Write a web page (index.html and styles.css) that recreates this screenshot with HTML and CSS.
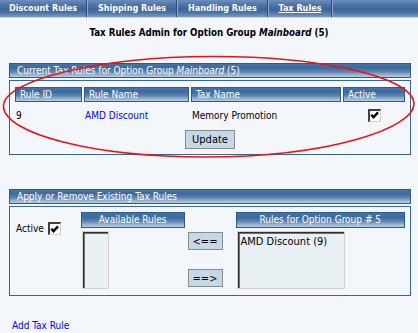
FILE: index.html
```html
<!DOCTYPE html>
<html>
<head>
<meta charset="utf-8">
<link rel="stylesheet" href="styles.css">
</head>
<body>
<nav class="tabs">
  <a class="tab tab-1">Discount Rules</a>
  <a class="tab tab-2">Shipping Rules</a>
  <a class="tab tab-3">Handling Rules</a>
  <a class="tab tab-4 current">Tax Rules</a>
</nav>

<h1 class="title">Tax Rules Admin for Option Group <i>Mainboard</i> (5)</h1>

<section class="panel panel-current">
  <div class="panel-head">Current Tax Rules for Option Group <i>Mainboard</i> (5)</div>
  <div class="panel-body">
    <div class="rules-grid">
      <div class="th">Rule ID</div>
      <div class="th">Rule Name</div>
      <div class="th">Tax Name</div>
      <div class="th">Active</div>
      <div class="td">9</div>
      <div class="td"><a class="link">AMD Discount</a></div>
      <div class="td">Memory Promotion</div>
      <div class="td td-center"><span class="cb"><svg viewBox="0 0 9 9" width="9" height="9"><path d="M1.3 3.8 L3.5 6.3 L8 1.4" fill="none" stroke="#000" stroke-width="2.4"/></svg></span></div>
    </div>
    <div class="actions"><button class="btn btn-update">Update</button></div>
  </div>
</section>

<section class="panel panel-apply">
  <div class="panel-head">Apply or Remove Existing Tax Rules</div>
  <div class="panel-body apply-body">
    <div class="active-field">Active <span class="cb"><svg viewBox="0 0 9 9" width="9" height="9"><path d="M1.3 3.8 L3.5 6.3 L8 1.4" fill="none" stroke="#000" stroke-width="2.4"/></svg></span></div>
    <div class="col col-avail">
      <div class="th th-center">Available Rules</div>
      <div class="listbox listbox-small"></div>
    </div>
    <div class="arrows">
      <button class="btn btn-arrow">&lt;==</button>
      <button class="btn btn-arrow">==&gt;</button>
    </div>
    <div class="col col-group">
      <div class="th th-center">Rules for Option Group # 5</div>
      <div class="listbox listbox-wide">AMD Discount (9)</div>
    </div>
  </div>
</section>

<a class="link add-link">Add Tax Rule</a>

<svg class="circle" width="418" height="333" viewBox="0 0 418 333">
  <path d="M210 56.5 C315 56, 414 76, 414 104 C414 128, 330 157, 205 157 C95 157, 3.5 134, 3.5 106 C3.5 80, 100 57, 210 56.5 Z" fill="none" stroke="#ee1111" stroke-width="1.6"/>
</svg>
</body>
</html>
```

FILE: styles.css
```css
html, body {
  margin: 0;
  padding: 0;
}
body {
  position: relative;
  width: 418px;
  height: 333px;
  overflow: hidden;
  background: #f3f6fa;
  font-family: "DejaVu Sans Condensed", "DejaVu Sans", sans-serif;
  font-stretch: condensed;
  font-size: 10px;
  color: #000;
}

/* tab bar */
.tabs {
  display: flex;
  height: 17px;
  background: linear-gradient(#6e8fbc 0%, #5077a8 25%, #3d6698 55%, #4b74a7 75%, #7b9bc5 100%);
  border-bottom: 1px solid #c9d6e6;
}
.tab {
  box-sizing: border-box;
  color: #fff;
  font-weight: bold;
  font-size: 9px;
  line-height: 16px;
  text-align: center;
  border-right: 1px solid #2a4c78;
  box-shadow: 1px 0 0 #8eaad0;
  white-space: nowrap;
}
.tab-1 { width: 87px; }
.tab-2 { width: 89px; margin-left: 1px; }
.tab-3 { width: 90px; margin-left: 1px; }
.tab-4 { width: 63px; margin-left: 1px; }
.current { text-decoration: underline; }

.title {
  margin: 9px 0 0 0;
  font-size: 9.7px;
  font-weight: bold;
  line-height: 12px;
  text-align: center;
}

/* panels */
.panel {
  margin: 0 7px 0 9px;
}
.panel-current { margin-top: 24px; }
.panel-apply { margin-top: 34px; }

.panel-head, .th {
  box-sizing: border-box;
  height: 15px;
  line-height: 13px;
  border: 1px solid #2e5b8c;
  background: linear-gradient(#4674a6 0%, #3c6a9d 30%, #5d85b3 60%, #9cb7d5 85%, #b6cbe2 100%);
  color: #fff;
  white-space: nowrap;
}
.panel-head {
  padding-left: 7px;
}
.panel-body {
  margin-top: 2px;
  border: 1px solid #336699;
  padding: 6px 5px 5px 5px;
}

.rules-grid {
  display: grid;
  grid-template-columns: 67px 105px 150px 62px;
  grid-template-rows: 15px 26px;
  column-gap: 2px;
}
.th { padding-left: 4px; }
.th-center { padding-left: 0; text-align: center; }
.td {
  display: flex;
  align-items: center;
  padding-left: 1px;
  white-space: nowrap;
}
.td-center { justify-content: center; padding-left: 0; }

.link { color: #0000ff; text-decoration: none; }

.cb {
  display: inline-flex;
  align-items: center;
  justify-content: center;
  box-sizing: border-box;
  width: 13px;
  height: 13px;
  background: #fff;
  border-top: 2px solid #404040;
  border-left: 2px solid #404040;
  border-right: 1px solid #d4d0c8;
  border-bottom: 1px solid #d4d0c8;
}

.actions {
  display: flex;
  justify-content: center;
  margin-top: 2px;
}
.btn {
  box-sizing: border-box;
  height: 19px;
  padding: 0;
  background: #c5d8e8;
  border: 1px solid #8a8a8a;
  font-family: inherit;
  font-stretch: condensed;
  font-size: 11px;
  color: #000;
}
.btn-update { width: 50px; }

/* apply section */
.apply-body {
  display: flex;
  align-items: flex-start;
  padding: 5px 5px 6px 6px;
}
.active-field {
  display: flex;
  align-items: center;
  gap: 4px;
  width: 65px;
  padding-top: 10px;
}
.col { display: flex; flex-direction: column; }
.col-avail { width: 104px; }
.col-group { width: 170px; margin-left: 13px; }
.col .th { height: 16px; line-height: 14px; }

.listbox {
  box-sizing: border-box;
  height: 58px;
  margin-top: 3px;
  margin-left: 1px;
  background: #e9f0f4;
  border: 1px solid #d4d0c8;
  box-shadow: inset 1px 1px 0 #303030, inset 2px 2px 0 #707070;
  font-size: 11px;
  padding: 3px 0 0 3px;
}
.listbox-small { width: 27px; }
.listbox-wide { width: 108px; }

.arrows {
  display: flex;
  flex-direction: column;
  gap: 19px;
  margin-left: 3px;
  padding-top: 20px;
}
.btn-arrow { width: 35px; height: 18px; }

.add-link {
  display: block;
  margin: 24px 0 0 12px;
  line-height: 12px;
}

.circle {
  position: absolute;
  left: 0;
  top: 0;
  pointer-events: none;
}
```
